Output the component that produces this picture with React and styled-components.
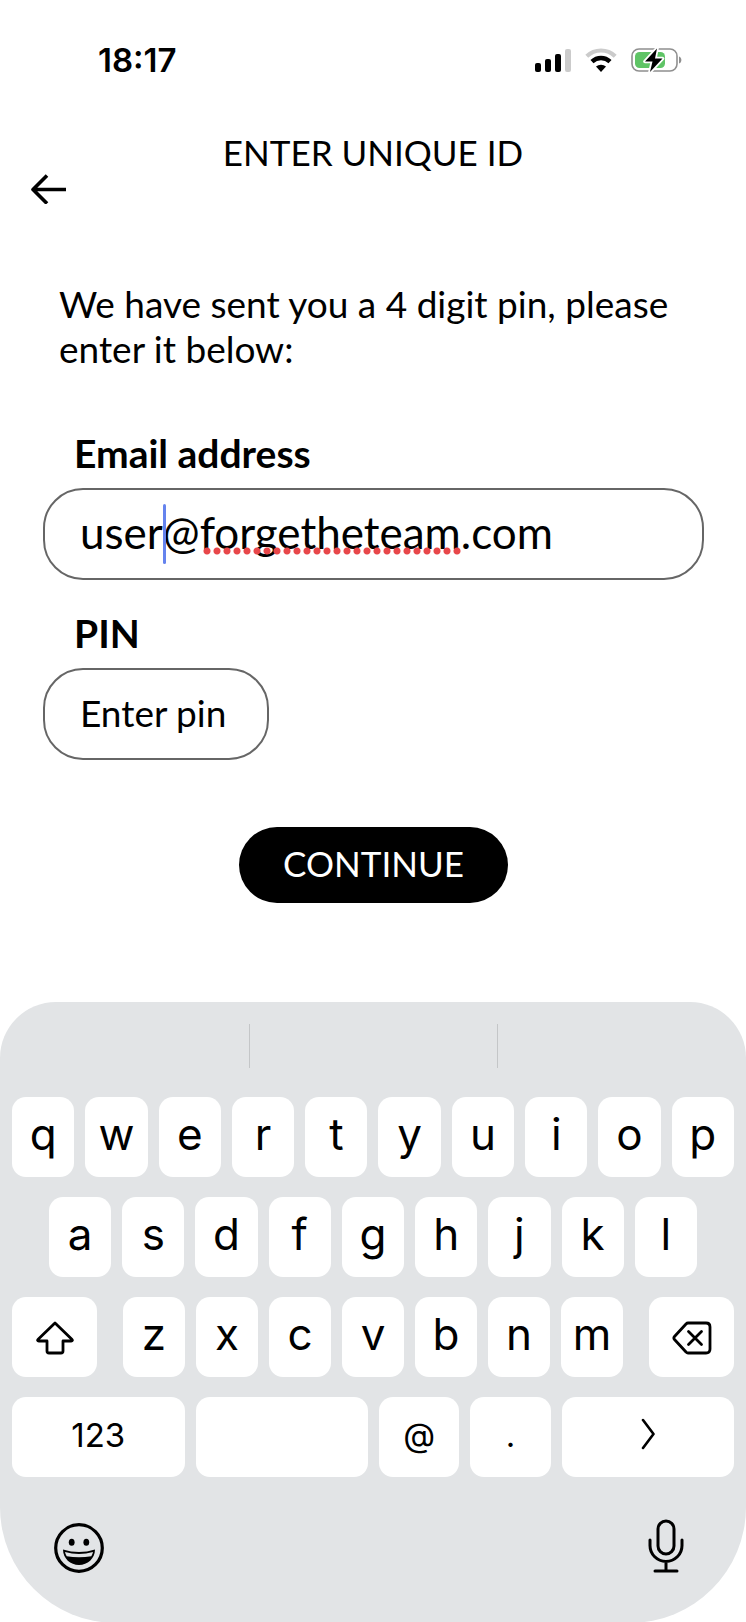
import React, { useState } from "react";
import styled, { createGlobalStyle } from "styled-components";

const GlobalStyle = createGlobalStyle`
  * {
    box-sizing: border-box;
  }

  body {
    margin: 0;
    background: #fff;
    color: #000;
    font-family: Lato, "Open Sans", sans-serif;
  }

  button, input {
    font-family: inherit;
    color: inherit;
  }

  svg {
    display: block;
  }
`;

const Screen = styled.div`
  display: flex;
  flex-direction: column;
  min-height: 100vh;
  overflow: hidden;
`;

// Top bar with the clock and the phone icons
const StatusBar = styled.div`
  display: flex;
  justify-content: space-between;
  align-items: center;
  height: 120px;
  padding: 0 63px 0 98px;
`;

const Clock = styled.time`
  font-family: Inter, sans-serif;
  font-size: 33px;
  font-weight: 600;
`;

const StatusIcons = styled.div`
  display: flex;
  align-items: center;
  gap: 14px;
`;

const Header = styled.header`
  padding: 10px 24px 0;
`;

const Title = styled.h1`
  margin: 0;
  font-size: 35px;
  font-weight: 400;
  line-height: 44px;
  text-align: center;
`;

const BackButton = styled.button`
  display: block;
  padding: 0 6px;
  border: 0;
  background: none;
  cursor: pointer;
`;

const Form = styled.form`
  display: flex;
  flex-direction: column;
  padding: 77px 42px 0 43px;
`;

const Intro = styled.p`
  margin: 0 0 29px;
  padding: 0 16px;
  font-size: 37px;
  line-height: 45px;
`;

const Field = styled.div`
  padding-top: 31px;
`;

const Label = styled.label`
  display: block;
  padding: 0 31px;
  margin-bottom: 13px;
  font-size: 39px;
  font-weight: 700;
  line-height: 44px;
`;

const InputWrap = styled.div`
  position: relative;
`;

const TextInput = styled.input`
  display: block;
  width: ${(props) => (props.$short ? "226px" : "100%")};
  height: 92px;
  padding: 0 35px 4px;
  border: 2px solid #666;
  border-radius: 40px;
  outline: none;
  background: #fff;
  font-size: ${(props) => (props.$short ? "37px" : "44px")};
  caret-color: #5b7ce6;

  &::placeholder {
    color: #000;
    opacity: 1;
  }
`;

// Sits over the input, between the name and the domain
const Caret = styled.span`
  position: absolute;
  top: 16px;
  left: 120px;
  width: 3px;
  height: 60px;
  border-radius: 2px;
  background: #6583ee;
`;

// Red dots under the misspelled word
const SpellingDots = styled.span`
  position: absolute;
  top: 59px;
  left: 159px;
  width: 260px;
  height: 8px;
  background: radial-gradient(circle, #e8474a 3px, transparent 4px) 0 0 / 10px 8px;
`;

const ContinueButton = styled.button`
  align-self: center;
  width: 269px;
  height: 76px;
  margin: 67px 0 99px;
  padding: 0 0 4px;
  border: 0;
  border-radius: 38px;
  background: #000;
  color: #fff;
  font-size: 35px;
  cursor: pointer;
`;

const Keyboard = styled.section`
  margin-top: auto;
  padding: 22px 12px 50px;
  border-radius: 56px 56px 116px 116px;
  background: #e2e4e6;
  font-family: Inter, sans-serif;
`;

const Suggestions = styled.div`
  display: grid;
  grid-template-columns: repeat(3, 1fr);
  height: 44px;
  margin: 0 -12px 29px;
`;

const Suggestion = styled.div`
  & + & {
    border-left: 1px solid #c4c6c8;
  }
`;

const KeyRow = styled.div`
  display: flex;
  gap: 11px;
  margin-bottom: 20px;
  padding: 0 ${(props) => (props.$inset ? "37px" : "0")};
`;

const Letters = styled.div`
  display: flex;
  flex: 500 1 0;
  gap: 11px;
  margin: 0 15px;
`;

const Key = styled.button`
  display: flex;
  justify-content: center;
  align-items: center;
  flex: ${(props) => props.$grow || 62} 1 0;
  min-width: 0;
  height: 80px;
  padding: 0 0 ${(props) => (props.$small ? "4px" : "6px")};
  border: 0;
  border-radius: 14px;
  background: #fff;
  font-size: ${(props) => (props.$small ? "33px" : "44px")};
  cursor: pointer;
`;

const IconKey = styled(Key)`
  padding: 2px 0 0;
`;

const KeyboardFooter = styled.div`
  display: flex;
  justify-content: space-between;
  align-items: flex-end;
  padding: 22px 50px 0 42px;
`;

const FooterButton = styled.button`
  padding: 0;
  border: 0;
  background: none;
  cursor: pointer;
`;

const SignalIcon = () => (
  <svg width="36" height="24" viewBox="0 0 36 24">
    <rect x="0" y="15" width="6" height="9" rx="2" />
    <rect x="10" y="11" width="6" height="13" rx="2" />
    <rect x="20" y="6" width="6" height="18" rx="2" />
    <rect x="30" y="1" width="6" height="23" rx="2" fill="#cbcbcb" />
  </svg>
);

const WifiIcon = () => (
  <svg width="32" height="24" viewBox="0 0 32 24">
    <path d="M1.800 8.200a20.500 20.500 0 0 1 28.400 0" fill="none" stroke="#cbcbcb" strokeWidth="4.200" />
    <path d="M7 13.600a13 13 0 0 1 18 0" fill="none" stroke="#000" strokeWidth="4.400" />
    <path d="M11 18.600a7.600 7.600 0 0 1 10 0L16 24z" />
  </svg>
);

const BatteryIcon = () => (
  <svg width="52" height="26" viewBox="0 0 52 26">
    <rect x="1" y="2" width="45" height="22" rx="7" fill="#fff" stroke="#8f8f8f" strokeWidth="1.600" />
    <path d="M48 9.500c3.200 1 3.200 6 0 7z" fill="#8f8f8f" />
    <rect x="4" y="5" width="30" height="16" rx="4.500" fill="#5fc466" />
    <path
      d="M26 1.500 14 14.500h7.500L19 25 31.500 11.500h-7.500z"
      stroke="#fff"
      strokeWidth="3.600"
      strokeLinejoin="round"
    />
    <path d="M26 1.500 14 14.500h7.500L19 25 31.500 11.500h-7.500z" />
  </svg>
);

const ArrowIcon = () => (
  <svg width="37" height="30" viewBox="0 0 37 30" fill="none" stroke="#000" strokeWidth="3.600">
    <path d="M36 15.500H3M17 1.500l-14 14 14 14" strokeLinejoin="round" />
  </svg>
);

const ShiftIcon = () => (
  <svg width="38" height="34" viewBox="0 0 38 34" fill="none" stroke="#000" strokeWidth="2.800">
    <path
      d="M19 2 2.200 18.200c-1 1-.6 1.800.6 1.800H11v10q0 2 2 2h12q2 0 2-2V20h8.200c1.200 0 1.600-.8.6-1.800z"
      strokeLinejoin="round"
    />
  </svg>
);

const BackspaceIcon = () => (
  <svg width="40" height="34" viewBox="0 0 40 34" fill="none" stroke="#000" strokeWidth="2.800">
    <path
      d="M16 2h18q4 0 4 4v22q0 4-4 4H16q-1 0-2-1L2.500 18.500q-1.300-1.500 0-3L14 3q1-1 2-1z"
      strokeLinejoin="round"
    />
    <path d="M16.500 10.500l13 13M29.500 10.500l-13 13" strokeLinecap="round" />
  </svg>
);

const ChevronIcon = () => (
  <svg width="14" height="32" viewBox="0 0 14 32" fill="none" stroke="#000" strokeWidth="2.600">
    <path d="M2 2l10.500 14L2 30" strokeLinecap="round" strokeLinejoin="round" />
  </svg>
);

const SmileIcon = () => (
  <svg width="50" height="50" viewBox="0 0 50 50">
    <circle cx="25" cy="25" r="23.300" fill="none" stroke="#000" strokeWidth="3.200" />
    <ellipse cx="17.700" cy="19.300" rx="2.900" ry="3.500" />
    <ellipse cx="32.300" cy="19.300" rx="2.900" ry="3.500" />
    <path d="M9 26.500q16 5 32 0c0 9-7.500 15.500-16 15.500S9 35.500 9 26.500z" />
    <path d="M11 29q14 4 28 0-.5 2.500-1.700 4.300-12.300 2-24.600 0Q11.500 31.500 11 29z" fill="#e2e4e6" />
  </svg>
);

const MicIcon = () => (
  <svg width="36" height="54" viewBox="0 0 36 54" fill="none" stroke="#000" strokeWidth="3">
    <rect x="10" y="2" width="16" height="33" rx="8" />
    <path d="M2 21v5.500a16 16 0 0 0 32 0V21M18 42.500V52M7 52h22" strokeLinecap="round" />
  </svg>
);

const LetterKeys = ({ letters }) =>
  letters.split("").map((letter) => (
    <Key key={letter} type="button">
      {letter}
    </Key>
  ));

const App = () => {
  const [email, setEmail] = useState("user@forgetheteam.com");
  const [pin, setPin] = useState("");

  return (
    <Screen>
      <GlobalStyle />
      <StatusBar>
        <Clock>18:17</Clock>
        <StatusIcons>
          <SignalIcon />
          <WifiIcon />
          <BatteryIcon />
        </StatusIcons>
      </StatusBar>

      <Header>
        <Title>ENTER UNIQUE ID</Title>
        <BackButton type="button" aria-label="Back">
          <ArrowIcon />
        </BackButton>
      </Header>

      <Form onSubmit={(e) => e.preventDefault()}>
        <Intro>We have sent you a 4 digit pin, please enter it below:</Intro>
        <Field>
          <Label htmlFor="email">Email address</Label>
          <InputWrap>
            <TextInput
              id="email"
              type="text"
              spellCheck={false}
              value={email}
              onChange={(e) => setEmail(e.target.value)}
            />
            <SpellingDots />
            <Caret />
          </InputWrap>
        </Field>
        <Field>
          <Label htmlFor="pin">PIN</Label>
          <TextInput
            $short
            id="pin"
            type="text"
            inputMode="numeric"
            placeholder="Enter pin"
            value={pin}
            onChange={(e) => setPin(e.target.value)}
          />
        </Field>
        <ContinueButton type="submit">CONTINUE</ContinueButton>
      </Form>

      <Keyboard aria-label="Keyboard">
        <Suggestions>
          <Suggestion />
          <Suggestion />
          <Suggestion />
        </Suggestions>
        <KeyRow>
          <LetterKeys letters="qwertyuiop" />
        </KeyRow>
        <KeyRow $inset>
          <LetterKeys letters="asdfghjkl" />
        </KeyRow>
        <KeyRow>
          <IconKey type="button" $grow={85} aria-label="Shift">
            <ShiftIcon />
          </IconKey>
          <Letters>
            <LetterKeys letters="zxcvbnm" />
          </Letters>
          <IconKey type="button" $grow={85} aria-label="Delete">
            <BackspaceIcon />
          </IconKey>
        </KeyRow>
        <KeyRow>
          <Key type="button" $grow={172} $small>
            123
          </Key>
          <Key type="button" $grow={172} aria-label="Space" />
          <Key type="button" $grow={80} $small>
            @
          </Key>
          <Key type="button" $grow={80} $small>
            .
          </Key>
          <Key type="button" $grow={172} aria-label="Next">
            <ChevronIcon />
          </Key>
        </KeyRow>
        <KeyboardFooter>
          <FooterButton type="button" aria-label="Emoji">
            <SmileIcon />
          </FooterButton>
          <FooterButton type="button" aria-label="Dictate">
            <MicIcon />
          </FooterButton>
        </KeyboardFooter>
      </Keyboard>
    </Screen>
  );
};

export default App;
